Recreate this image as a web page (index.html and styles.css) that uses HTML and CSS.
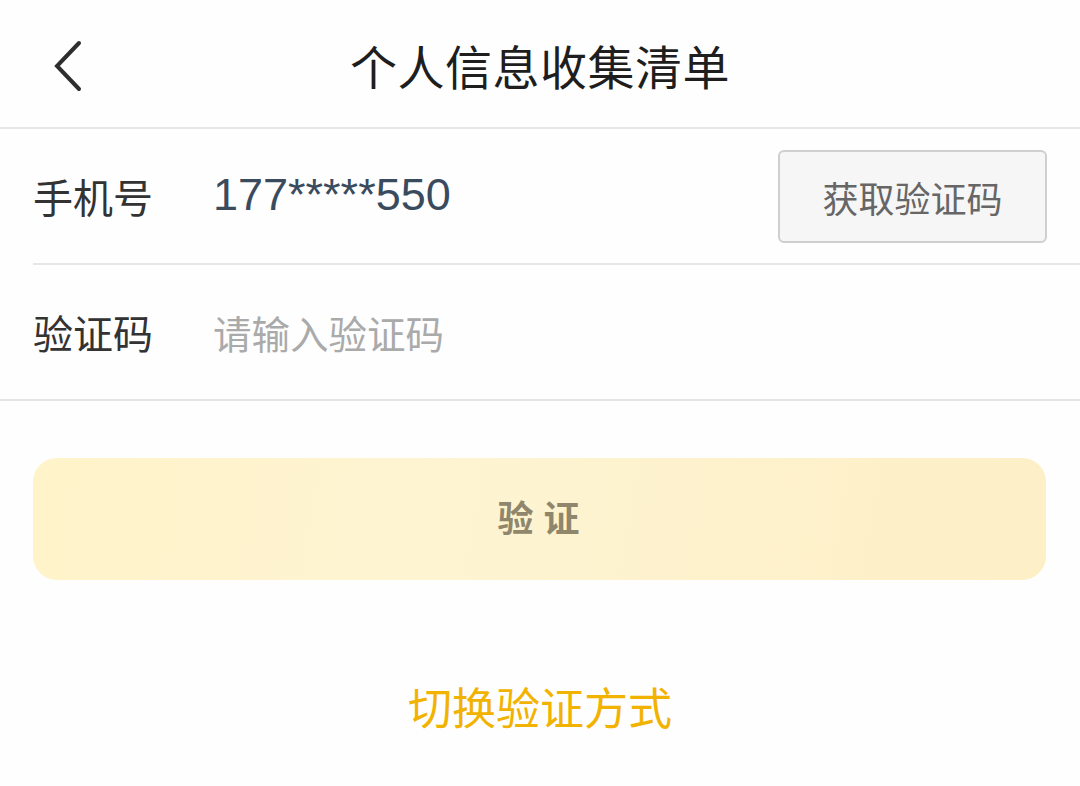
FILE: index.html
```html
<!DOCTYPE html>
<html lang="zh-CN">
<head>
<meta charset="utf-8">
<title>个人信息收集清单</title>
<link rel="stylesheet" href="styles.css">
</head>
<body>
<div class="page">
  <header class="header">
    <span class="back">
      <svg width="40" height="60" viewBox="0 0 40 60"><path d="M33 7 L11 30 L33 53" fill="none" stroke="#2e2e2e" stroke-width="4" stroke-linecap="round" stroke-linejoin="miter"/></svg>
    </span>
    <h1 class="title">个人信息收集清单</h1>
  </header>
  <div class="form">
    <div class="row row-phone">
      <span class="label">手机号</span>
      <span class="phone">177*****550</span>
      <button class="code-btn">获取验证码</button>
    </div>
    <div class="row row-code">
      <span class="label">验证码</span>
      <span class="placeholder">请输入验证码</span>
    </div>
  </div>
  <div class="actions">
    <button class="verify">验证</button>
  </div>
  <div class="switch">切换验证方式</div>
</div>
</body>
</html>
```
FILE: styles.css
```css
html, body {
  margin: 0;
  padding: 0;
  background: #fefefe;
}
body {
  font-family: "Noto Sans CJK SC", "Liberation Sans", sans-serif;
  color: #333;
}
.page {
  width: 1080px;
  height: 786px;
  overflow: hidden;
}
.header {
  height: 127px;
  display: flex;
  align-items: center;
  justify-content: center;
  border-bottom: 2px solid #e6e6e6;
  position: relative;
}
.back {
  position: absolute;
  left: 46px;
  top: 36px;
  width: 40px;
  height: 60px;
}
.back svg { display: block; }
.title {
  margin: 0;
  font-size: 47px;
  font-weight: 400;
  color: #1e1e1e;
  line-height: 1;
  letter-spacing: 0.5px;
  padding-top: 2px;
}
.form {
  border-bottom: 2px solid #e4e4e4;
}
.row {
  display: flex;
  align-items: center;
  margin-left: 33px;
  height: 134px;
}
.row-phone {
  border-bottom: 2px solid #e6e6e6;
}
.label {
  width: 180px;
  font-size: 40px;
  color: #333;
  line-height: 1;
}
.phone {
  flex: 1;
  font-family: "Liberation Sans", sans-serif;
  font-size: 45px;
  color: #3a4b5e;
  line-height: 1;
  margin-top: -4px;
}
.placeholder {
  font-size: 38.5px;
  color: #aaa;
  line-height: 1;
}
.code-btn {
  width: 269px;
  height: 93px;
  margin-right: 33px;
  border: 2px solid #cfcfcf;
  border-radius: 6px;
  background: #f6f6f6;
  color: #666;
  font-family: "Noto Sans CJK SC", sans-serif;
  font-size: 36px;
  padding: 0;
  margin-top: 1px;
}
.actions {
  padding: 57px 34px 0 33px;
}
.verify {
  display: block;
  width: 100%;
  height: 122px;
  border: none;
  border-radius: 24px;
  background: linear-gradient(100deg, #fff3c9 0%, #fef4d2 40%, #fdefc6 100%);
  color: #8f866b;
  font-family: "Noto Sans CJK SC", sans-serif;
  font-size: 36px;
  font-weight: 700;
  letter-spacing: 10px;
  text-indent: 8px;
  padding: 0 0 6px 0;
}
.switch {
  margin-top: 104px;
  text-align: center;
  font-size: 44px;
  color: #f2b300;
  line-height: 1;
}
```
